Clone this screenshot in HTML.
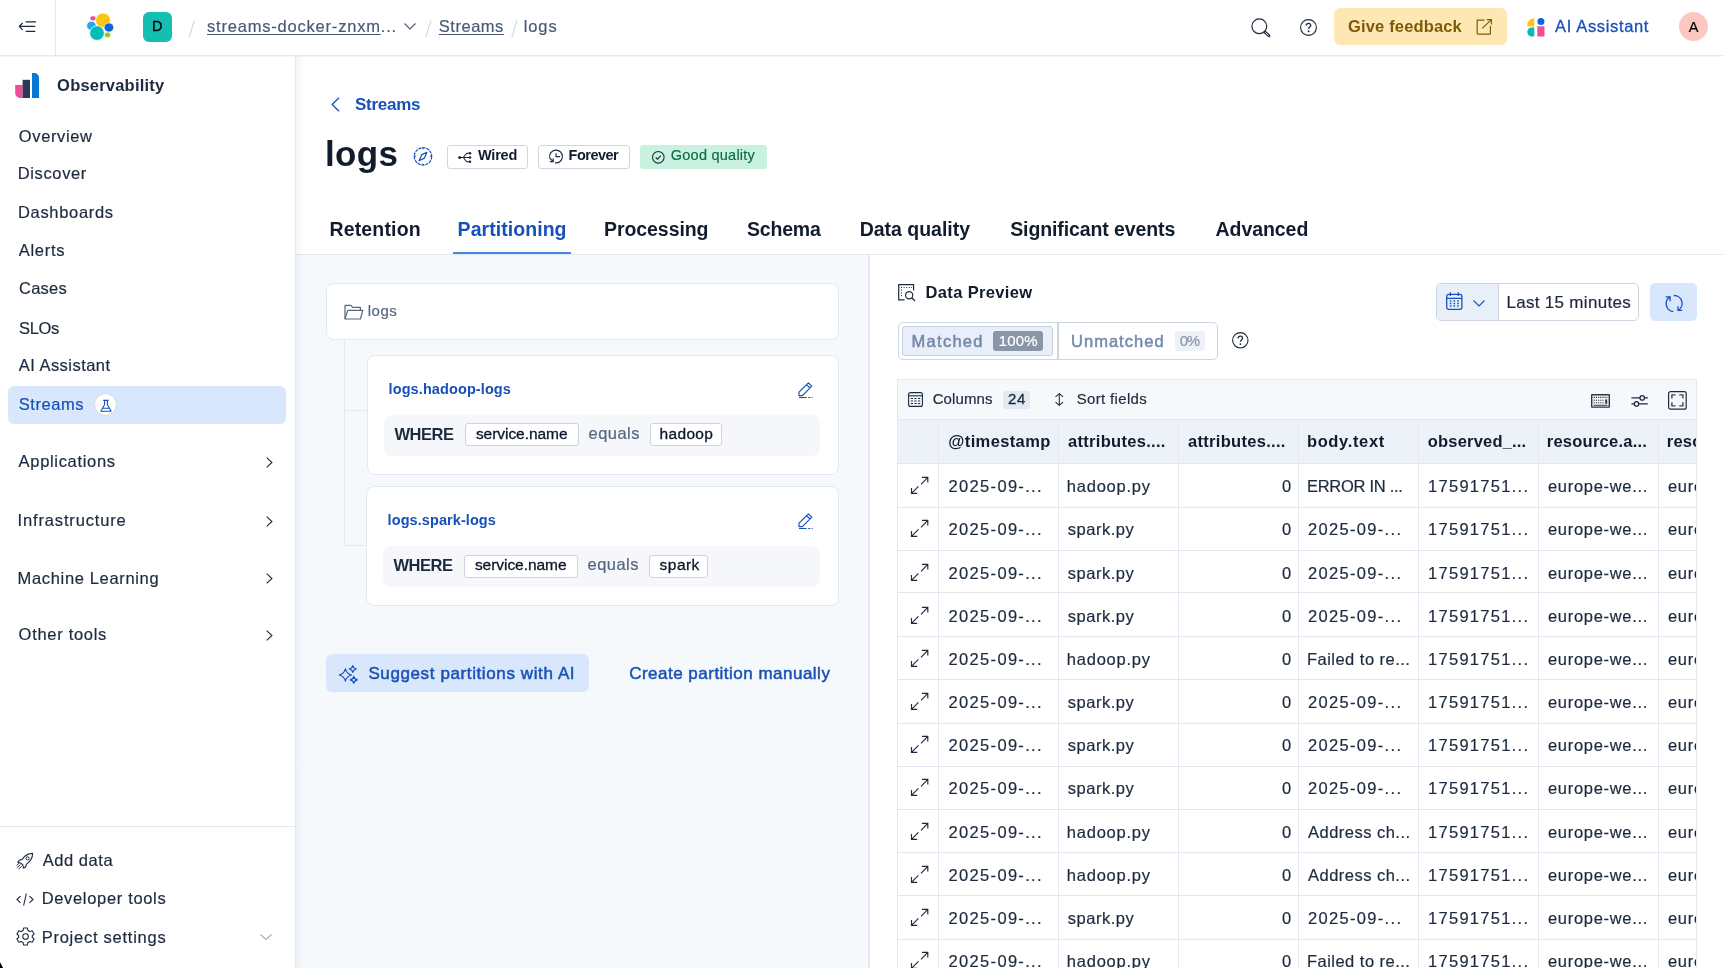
<!DOCTYPE html><html><head><meta charset="utf-8"><style>
*{box-sizing:border-box;margin:0;padding:0}
html,body{width:1723px;height:968px;overflow:hidden;background:#fff;font-family:"Liberation Sans",sans-serif;color:#1d2a3e}
.t{position:absolute;white-space:nowrap;line-height:1}
#w{position:absolute;left:0;top:0;width:1723px;height:968px;will-change:transform}
.a{position:absolute}
svg{position:absolute;overflow:visible}
</style></head><body><div id="w">
<div class="a" style="left:0;top:55px;width:1723px;height:1px;background:#e3e7ef"></div>
<div class="a" style="left:0;top:56px;width:1723px;height:1px;background:#f4f6f9"></div>
<div class="a" style="left:55px;top:0;width:1px;height:55px;background:#e3e7ef"></div>
<svg style="left:19px;top:21px" width="17" height="11" viewBox="0 0 17 11"><path d="M7.1 0.9H16.6M7.1 10.3H15.8M0.4 5.4H15.8M3.4 2.3Q1.2 4.3 0.4 5.4Q1.2 6.6 3.4 8.6" fill="none" stroke="#1d2a3e" stroke-width="1.15" stroke-linecap="round"/></svg>
<svg style="left:86px;top:13px" width="28" height="28" viewBox="0 0 28 28">
<g stroke="#fff" stroke-width="0.7">
<ellipse cx="7" cy="5.3" rx="3.1" ry="2.6" fill="#f04e98"/>
<ellipse cx="5.4" cy="12.8" rx="4.7" ry="4.5" fill="#1ba9f5"/>
<circle cx="17" cy="7.4" r="7.4" fill="#fec514"/>
<ellipse cx="22.9" cy="14.5" rx="4.8" ry="4.6" fill="#0b64dd"/>
<ellipse cx="21.5" cy="21.9" rx="3.1" ry="2.8" fill="#93c90e"/>
<circle cx="11" cy="20.1" r="7.3" fill="#02bcb7"/>
</g></svg>
<div class="a" style="left:143px;top:12.4px;width:29px;height:29.3px;border-radius:6px;background:#14bfb1"></div>
<div class="t" style="left:152.10px;top:19px;font-size:14.5px;font-weight:normal;color:#000;letter-spacing:0.000px;-webkit-text-stroke:0.35px #000">D</div>
<svg style="left:188px;top:19.5px" width="8" height="18"><path d="M6.3 0.5L1.2 17.3" stroke="#c9d0dc" stroke-width="1"/></svg>
<div class="t" style="left:207.00px;top:18px;font-size:16.5px;font-weight:normal;color:#4a5a78;letter-spacing:0.796px;-webkit-text-stroke:0.2px #4a5a78;"><span style="text-decoration:underline;text-decoration-thickness:1px;text-underline-offset:2px">streams-docker-znxm</span>...</div>
<svg style="left:404px;top:23px" width="12" height="7"><path d="M0.5 0.5L6 6L11.5 0.5" fill="none" stroke="#4a5a78" stroke-width="1.1"/></svg>
<svg style="left:425px;top:19.5px" width="8" height="18"><path d="M6 0.5L0.8 17.3" stroke="#c9d0dc" stroke-width="1"/></svg>
<div class="t" style="left:438.80px;top:18px;font-size:16.5px;font-weight:normal;color:#4a5a78;letter-spacing:0.520px;-webkit-text-stroke:0.2px #4a5a78;"><span style="text-decoration:underline;text-decoration-thickness:1px;text-underline-offset:2px">Streams</span></div>
<svg style="left:511px;top:19.5px" width="8" height="18"><path d="M6 0.5L0.8 17.3" stroke="#c9d0dc" stroke-width="1"/></svg>
<div class="t" style="left:523.80px;top:18px;font-size:16.5px;font-weight:normal;color:#4a5a78;letter-spacing:0.860px;-webkit-text-stroke:0.2px #4a5a78;">logs</div>
<svg style="left:1251px;top:18px" width="20" height="19" viewBox="0 0 20 19"><circle cx="8.3" cy="8.3" r="7.4" fill="none" stroke="#1d2a3e" stroke-width="1.2"/><path d="M13.9 14.1L17.9 17.7" stroke="#1d2a3e" stroke-width="2.9" stroke-linecap="round"/><path d="M14.4 14.6L17.5 17.3" stroke="#fff" stroke-width="0.9" stroke-linecap="round"/></svg>
<svg style="left:1300px;top:19px" width="17" height="17" viewBox="0 0 17 17"><circle cx="8.5" cy="8.5" r="7.9" fill="none" stroke="#1d2a3e" stroke-width="1.1"/><path d="M6.3 6.6C6.3 5.2 7.3 4.4 8.5 4.4C9.8 4.4 10.7 5.2 10.7 6.4C10.7 7.9 8.6 8 8.6 9.9" fill="none" stroke="#1d2a3e" stroke-width="1.3"/><circle cx="8.6" cy="12.3" r="0.95" fill="#1d2a3e"/></svg>
<div class="a" style="left:1334px;top:8.1px;width:173px;height:37.4px;border-radius:6px;background:#fde8b3"></div>
<div class="t" style="left:1348.00px;top:18px;font-size:16.5px;font-weight:bold;color:#7e5a08;letter-spacing:0.157px;">Give feedback</div>
<svg style="left:1476px;top:19px" width="17" height="16" viewBox="0 0 17 16"><path d="M8.5 1.1H1.2V14.6Q1.2 15.2 1.8 15.2H13.8Q14.4 15.2 14.4 14.6V7.1" fill="none" stroke="#7e5a08" stroke-width="1.2"/><path d="M6.2 9.4L15.4 0.6M10.8 0.6H15.4V5.4" fill="none" stroke="#7e5a08" stroke-width="1.2"/></svg>
<svg style="left:1527px;top:18px" width="18" height="19" viewBox="0 0 18 19">
<path d="M7.3 0.3V8.6H0.3V7.3A7 7 0 0 1 7.3 0.3Z" fill="#fec514"/>
<circle cx="13.9" cy="3.5" r="3.5" fill="#0b64dd"/>
<path d="M7.3 9.4V18.5H4.8A4.5 4.5 0 0 1 0.3 14V14A4.5 4.5 0 0 1 4.8 9.4Z" fill="#02bcb7"/>
<rect x="10.3" y="8.3" width="7.2" height="10.2" fill="#f04e98"/>
</svg>
<div class="t" style="left:1555.00px;top:18px;font-size:16.5px;font-weight:normal;color:#1750ba;letter-spacing:0.652px;-webkit-text-stroke:0.3px #1750ba">AI Assistant</div>
<div class="a" style="left:1679.2px;top:12.3px;width:29px;height:29px;border-radius:50%;background:#fbc8c1"></div>
<div class="t" style="left:1688.80px;top:20px;font-size:14.5px;font-weight:normal;color:#000;letter-spacing:0.000px;-webkit-text-stroke:0.2px #000">A</div>
<div class="a" style="left:295px;top:56px;width:1px;height:912px;background:#e3e7ef"></div>
<svg style="left:15px;top:73px" width="25" height="25" viewBox="0 0 25 25">
<path d="M0.2 11.9H7.6V25H5A4.8 4.8 0 0 1 0.2 20.2Z" fill="#f04e98"/>
<rect x="7.6" y="6.8" width="7.4" height="18.2" fill="#2a3a55"/>
<path d="M17 0H19.3A4.7 4.7 0 0 1 24 4.7V25H17Z" fill="#0877d2"/>
</svg>
<div class="t" style="left:57.10px;top:77px;font-size:16.5px;font-weight:bold;color:#1d2a3e;letter-spacing:0.211px;">Observability</div>
<div class="t" style="left:18.80px;top:128px;font-size:16.5px;font-weight:normal;color:#1d2a3e;letter-spacing:0.622px;-webkit-text-stroke:0.2px #1d2a3e;">Overview</div>
<div class="t" style="left:17.80px;top:165px;font-size:16.5px;font-weight:normal;color:#1d2a3e;letter-spacing:0.616px;-webkit-text-stroke:0.2px #1d2a3e;">Discover</div>
<div class="t" style="left:18.00px;top:204px;font-size:16.5px;font-weight:normal;color:#1d2a3e;letter-spacing:0.676px;-webkit-text-stroke:0.2px #1d2a3e;">Dashboards</div>
<div class="t" style="left:18.75px;top:242px;font-size:16.5px;font-weight:normal;color:#1d2a3e;letter-spacing:0.705px;-webkit-text-stroke:0.2px #1d2a3e;">Alerts</div>
<div class="t" style="left:19.00px;top:280px;font-size:16.5px;font-weight:normal;color:#1d2a3e;letter-spacing:0.245px;-webkit-text-stroke:0.2px #1d2a3e;">Cases</div>
<div class="t" style="left:19.00px;top:320px;font-size:16.5px;font-weight:normal;color:#1d2a3e;letter-spacing:-0.339px;-webkit-text-stroke:0.2px #1d2a3e;">SLOs</div>
<div class="t" style="left:18.80px;top:357px;font-size:16.5px;font-weight:normal;color:#1d2a3e;letter-spacing:0.461px;-webkit-text-stroke:0.2px #1d2a3e;">AI Assistant</div>
<div class="a" style="left:8.4px;top:385.6px;width:277.2px;height:38.3px;border-radius:6px;background:#d9e7fc"></div>
<div class="t" style="left:18.80px;top:396px;font-size:16.5px;font-weight:normal;color:#1750ba;letter-spacing:0.536px;-webkit-text-stroke:0.2px #1750ba;">Streams</div>
<div class="a" style="left:94px;top:392.8px;width:23px;height:23px;border-radius:50%;background:#fff;border:1px solid #cfd7e4"></div>
<svg style="left:99.5px;top:398.5px" width="12" height="13" viewBox="0 0 12 13"><path d="M3.2 1.4H8.6M4.6 1.4V5.6L0.9 12.2H11.1L7.4 5.6V1.4M2.7 9.2H9.3" fill="none" stroke="#1750ba" stroke-width="1.1" stroke-linejoin="round"/></svg>
<div class="t" style="left:18.60px;top:453px;font-size:16.5px;font-weight:normal;color:#1d2a3e;letter-spacing:0.680px;-webkit-text-stroke:0.2px #1d2a3e;">Applications</div>
<svg style="left:265.5px;top:457.0px" width="7" height="11" viewBox="0 0 7 11"><path d="M0.7 0.7L5.9 5.5L0.7 10.3" fill="none" stroke="#1d2a3e" stroke-width="1.1"/></svg>
<div class="t" style="left:17.60px;top:512px;font-size:16.5px;font-weight:normal;color:#1d2a3e;letter-spacing:0.836px;-webkit-text-stroke:0.2px #1d2a3e;">Infrastructure</div>
<svg style="left:265.5px;top:516.1px" width="7" height="11" viewBox="0 0 7 11"><path d="M0.7 0.7L5.9 5.5L0.7 10.3" fill="none" stroke="#1d2a3e" stroke-width="1.1"/></svg>
<div class="t" style="left:17.60px;top:570px;font-size:16.5px;font-weight:normal;color:#1d2a3e;letter-spacing:0.654px;-webkit-text-stroke:0.2px #1d2a3e;">Machine Learning</div>
<svg style="left:265.5px;top:573.3px" width="7" height="11" viewBox="0 0 7 11"><path d="M0.7 0.7L5.9 5.5L0.7 10.3" fill="none" stroke="#1d2a3e" stroke-width="1.1"/></svg>
<div class="t" style="left:18.60px;top:626px;font-size:16.5px;font-weight:normal;color:#1d2a3e;letter-spacing:0.705px;-webkit-text-stroke:0.2px #1d2a3e;">Other tools</div>
<svg style="left:265.5px;top:630.2px" width="7" height="11" viewBox="0 0 7 11"><path d="M0.7 0.7L5.9 5.5L0.7 10.3" fill="none" stroke="#1d2a3e" stroke-width="1.1"/></svg>
<div class="a" style="left:0;top:826px;width:295px;height:1px;background:#e3e7ef"></div>
<svg style="left:16px;top:852px" width="18" height="18" viewBox="0 0 18 18"><path d="M16.6 1.4C12.2 1.4 8.8 3.4 5.8 7.6L3.2 8.2L1.8 10.4L5 11.2L6.8 13L7.6 16.2L9.8 14.8L10.4 12.2C14.6 9.2 16.6 5.8 16.6 1.4Z" fill="none" stroke="#1d2a3e" stroke-width="1.1" stroke-linejoin="round"/><circle cx="11.6" cy="6.4" r="1.6" fill="none" stroke="#1d2a3e" stroke-width="1"/><path d="M4.2 12.6L1 15.8M5.6 14.2L2.6 17.2M3 11.2L0.6 13.6" stroke="#1d2a3e" stroke-width="1"/></svg>
<div class="t" style="left:42.70px;top:852px;font-size:16.5px;font-weight:normal;color:#1d2a3e;letter-spacing:0.560px;-webkit-text-stroke:0.2px #1d2a3e;">Add data</div>
<svg style="left:16px;top:893px" width="18" height="13" viewBox="0 0 18 13"><path d="M4.5 3.2L1 6.5L4.5 9.8M13.5 3.2L17 6.5L13.5 9.8M10.4 0.5L7.6 12.5" fill="none" stroke="#1d2a3e" stroke-width="1.1"/></svg>
<div class="t" style="left:41.70px;top:890px;font-size:16.5px;font-weight:normal;color:#1d2a3e;letter-spacing:0.665px;-webkit-text-stroke:0.2px #1d2a3e;">Developer tools</div>
<svg style="left:15.5px;top:927px" width="19" height="19" viewBox="0 0 19 19"><path d="M7.6 1H11.4L11.9 3.4L13.9 4.5L16.2 3.7L18.1 7L16.3 8.6V10.4L18.1 12L16.2 15.3L13.9 14.5L11.9 15.6L11.4 18H7.6L7.1 15.6L5.1 14.5L2.8 15.3L0.9 12L2.7 10.4V8.6L0.9 7L2.8 3.7L5.1 4.5L7.1 3.4Z" fill="none" stroke="#1d2a3e" stroke-width="1.1" stroke-linejoin="round"/><circle cx="9.5" cy="9.5" r="2.8" fill="none" stroke="#1d2a3e" stroke-width="1.1"/></svg>
<div class="t" style="left:41.70px;top:929px;font-size:16.5px;font-weight:normal;color:#1d2a3e;letter-spacing:0.743px;-webkit-text-stroke:0.2px #1d2a3e;">Project settings</div>
<svg style="left:260.3px;top:934px" width="12" height="6" viewBox="0 0 12 6"><path d="M0.5 0.5L6 5.5L11.5 0.5" fill="none" stroke="#a3aec2" stroke-width="1.1"/></svg>
<svg style="left:331px;top:97px" width="9" height="15" viewBox="0 0 9 15"><path d="M8 0.7L1.2 7.5L8 14.3" fill="none" stroke="#1750ba" stroke-width="1.25"/></svg>
<div class="t" style="left:355.00px;top:96px;font-size:17px;font-weight:bold;color:#1750ba;letter-spacing:-0.273px;">Streams</div>
<div class="t" style="left:325.00px;top:136px;font-size:35px;font-weight:bold;color:#111c2c;letter-spacing:0.372px;">logs</div>
<svg style="left:414px;top:147px" width="19" height="19" viewBox="0 0 19 19"><circle cx="9" cy="9.4" r="8.7" fill="none" stroke="#1750ba" stroke-width="1.2" stroke-dasharray="3.2 0.8"/><path d="M9 0.7V2.2M9 16.6V18.1M0.3 9.4H1.8M16.2 9.4H17.7" stroke="#1750ba" stroke-width="1.1"/><path d="M12.9 5.3L10.4 11.1L5.1 13.7L7.6 7.9Z" fill="none" stroke="#1750ba" stroke-width="1.2" stroke-linejoin="round"/></svg>
<div class="a" style="left:447.3px;top:144.5px;width:80.5px;height:24.5px;border:1px solid #cfd6e2;border-radius:3px;background:#fff"></div>
<svg style="left:458.3px;top:150.5px" width="14" height="13" viewBox="0 0 14 13"><path d="M1.5 6.5H5.3L8.6 2.2H12M5.3 6.5H12M5.3 6.5L8.6 10.8H12" fill="none" stroke="#1d2a3e" stroke-width="1.05"/><circle cx="1.7" cy="6.5" r="1.5" fill="#1d2a3e"/><circle cx="12" cy="2.2" r="1.3" fill="#1d2a3e"/><circle cx="12" cy="6.5" r="1.3" fill="#1d2a3e"/><circle cx="12" cy="10.8" r="1.3" fill="#1d2a3e"/></svg>
<div class="t" style="left:477.90px;top:148px;font-size:14.5px;font-weight:bold;color:#111c2c;letter-spacing:-0.173px;">Wired</div>
<div class="a" style="left:538px;top:144.5px;width:92.3px;height:24.5px;border:1px solid #cfd6e2;border-radius:3px;background:#fff"></div>
<svg style="left:548.5px;top:150px" width="14" height="14" viewBox="0 0 14 14"><path d="M4.2 11.6L0.82 8.16A6.4 6.4 0 1 1 5.89 12.8" fill="none" stroke="#1d2a3e" stroke-width="1.1"/><path d="M7 3.3V6.6H11.1" fill="none" stroke="#1d2a3e" stroke-width="1.1"/><path d="M0.9 11.6H4.2V8.6" fill="none" stroke="#1d2a3e" stroke-width="1.2"/></svg>
<div class="t" style="left:568.60px;top:148px;font-size:14.5px;font-weight:bold;color:#111c2c;letter-spacing:-0.525px;">Forever</div>
<div class="a" style="left:640.2px;top:144.5px;width:126.6px;height:24.5px;border-radius:3px;background:#c8f1e0"></div>
<svg style="left:651.7px;top:150.7px" width="13" height="13" viewBox="0 0 13 13"><circle cx="6.3" cy="6.3" r="5.8" fill="none" stroke="#1d2a3e" stroke-width="1.05"/><path d="M3.7 6.5L5.5 8.2L8.9 4.7" fill="none" stroke="#1d2a3e" stroke-width="1.05"/></svg>
<div class="t" style="left:670.80px;top:148px;font-size:14.5px;font-weight:normal;color:#0c6b3f;letter-spacing:0.240px;-webkit-text-stroke:0.15px #0c6b3f">Good quality</div>
<div class="t" style="left:329.40px;top:220px;font-size:19.5px;font-weight:bold;color:#111c2c;letter-spacing:0.175px;">Retention</div>
<div class="t" style="left:457.60px;top:220px;font-size:19.5px;font-weight:bold;color:#1750ba;letter-spacing:0.053px;">Partitioning</div>
<div class="t" style="left:604.00px;top:220px;font-size:19.5px;font-weight:bold;color:#111c2c;letter-spacing:-0.068px;">Processing</div>
<div class="t" style="left:747.00px;top:220px;font-size:19.5px;font-weight:bold;color:#111c2c;letter-spacing:-0.189px;">Schema</div>
<div class="t" style="left:859.70px;top:220px;font-size:19.5px;font-weight:bold;color:#111c2c;letter-spacing:-0.016px;">Data quality</div>
<div class="t" style="left:1010.20px;top:220px;font-size:19.5px;font-weight:bold;color:#111c2c;letter-spacing:-0.102px;">Significant events</div>
<div class="t" style="left:1215.50px;top:220px;font-size:19.5px;font-weight:bold;color:#111c2c;letter-spacing:-0.055px;">Advanced</div>
<div class="a" style="left:296px;top:254px;width:1427px;height:1px;background:#e3e7ef"></div>
<div class="a" style="left:453.4px;top:252px;width:117.3px;height:2px;background:#4a85e0"></div>
<div class="a" style="left:296px;top:255px;width:572.5px;height:713px;background:#f6f9fc"></div>
<div class="a" style="left:868.4px;top:255px;width:1.4px;height:713px;background:#e6e7f0"></div>
<div class="a" style="left:326.4px;top:283.4px;width:512.9px;height:57px;border:1px solid #e3e8f2;border-radius:8px;background:#fff"></div>
<svg style="left:344px;top:304px" width="20" height="16" viewBox="0 0 20 16"><path d="M1 15V1.4H6.8L8.8 3.4H16.4V6.4" fill="none" stroke="#56667f" stroke-width="1.2" stroke-linejoin="round"/><path d="M1 15L3.7 6.4H18.8L16.4 15Z" fill="none" stroke="#56667f" stroke-width="1.2" stroke-linejoin="round"/></svg>
<div class="t" style="left:367.70px;top:303px;font-size:15px;font-weight:normal;color:#56667f;letter-spacing:0.528px;-webkit-text-stroke:0.2px #56667f;">logs</div>
<div class="a" style="left:344px;top:340px;width:1.2px;height:205.5px;background:#e3e8f2"></div>
<div class="a" style="left:344px;top:409.8px;width:23px;height:1.2px;background:#e3e8f2"></div>
<div class="a" style="left:344px;top:544.5px;width:22px;height:1.2px;background:#e3e8f2"></div>
<div class="a" style="left:367px;top:355.2px;width:472.29999999999995px;height:120px;border:1px solid #e3e8f2;border-radius:8px;background:#fff"></div>
<div class="t" style="left:388.60px;top:382px;font-size:14.5px;font-weight:bold;color:#1750ba;letter-spacing:0.096px;">logs.hadoop-logs</div>
<svg style="left:798.4px;top:380.5px" width="16" height="18" viewBox="0 0 16 18"><path d="M1 14.6V11.2L10.4 1.8L13.8 5.2L4.4 14.6Z M8.6 3.6L12 7" fill="none" stroke="#1750ba" stroke-width="1.2" stroke-linejoin="round"/><path d="M1 16.5H8.7M10.2 16.5H12.3M13.6 16.5H14.6" stroke="#1750ba" stroke-width="1.2"/></svg>
<div class="a" style="left:384.3px;top:414.5px;width:435.7px;height:41.2px;border-radius:8px;background:#f5f7fb"></div>
<div class="t" style="left:394.40px;top:426px;font-size:16.5px;font-weight:bold;color:#1d2a3e;letter-spacing:-0.453px;">WHERE</div>
<div class="a" style="left:464.7px;top:423.4px;width:114px;height:23.1px;border:1px solid #cdd4e0;border-radius:3px;background:#fff"></div>
<div class="t" style="left:475.90px;top:426px;font-size:15.5px;font-weight:normal;color:#0b1628;letter-spacing:-0.041px;-webkit-text-stroke:0.3px #0b1628">service.name</div>
<div class="t" style="left:588.60px;top:425px;font-size:16.5px;font-weight:normal;color:#56667f;letter-spacing:0.446px;-webkit-text-stroke:0.2px #56667f;">equals</div>
<div class="a" style="left:650.0px;top:423.4px;width:72.3px;height:23.1px;border:1px solid #cdd4e0;border-radius:3px;background:#fff"></div>
<div class="t" style="left:659.60px;top:426px;font-size:15.5px;font-weight:normal;color:#0b1628;letter-spacing:0.320px;-webkit-text-stroke:0.3px #0b1628">hadoop</div>
<div class="a" style="left:366px;top:486.3px;width:473.29999999999995px;height:120px;border:1px solid #e3e8f2;border-radius:8px;background:#fff"></div>
<div class="t" style="left:387.60px;top:513px;font-size:14.5px;font-weight:bold;color:#1750ba;letter-spacing:0.079px;">logs.spark-logs</div>
<svg style="left:798.4px;top:511.6px" width="16" height="18" viewBox="0 0 16 18"><path d="M1 14.6V11.2L10.4 1.8L13.8 5.2L4.4 14.6Z M8.6 3.6L12 7" fill="none" stroke="#1750ba" stroke-width="1.2" stroke-linejoin="round"/><path d="M1 16.5H8.7M10.2 16.5H12.3M13.6 16.5H14.6" stroke="#1750ba" stroke-width="1.2"/></svg>
<div class="a" style="left:383.3px;top:545.6px;width:436.7px;height:41.2px;border-radius:8px;background:#f5f7fb"></div>
<div class="t" style="left:393.40px;top:557px;font-size:16.5px;font-weight:bold;color:#1d2a3e;letter-spacing:-0.453px;">WHERE</div>
<div class="a" style="left:463.7px;top:554.5px;width:114px;height:23.1px;border:1px solid #cdd4e0;border-radius:3px;background:#fff"></div>
<div class="t" style="left:474.90px;top:557px;font-size:15.5px;font-weight:normal;color:#0b1628;letter-spacing:-0.041px;-webkit-text-stroke:0.3px #0b1628">service.name</div>
<div class="t" style="left:587.60px;top:556px;font-size:16.5px;font-weight:normal;color:#56667f;letter-spacing:0.446px;-webkit-text-stroke:0.2px #56667f;">equals</div>
<div class="a" style="left:649.0px;top:554.5px;width:58.5px;height:23.1px;border:1px solid #cdd4e0;border-radius:3px;background:#fff"></div>
<div class="t" style="left:659.60px;top:557px;font-size:15.5px;font-weight:normal;color:#0b1628;letter-spacing:0.462px;-webkit-text-stroke:0.3px #0b1628">spark</div>
<div class="a" style="left:326.2px;top:653.8px;width:263.1px;height:38.2px;border-radius:6px;background:#d9e7fd"></div>
<svg style="left:339px;top:664.5px" width="20" height="20" viewBox="0 0 20 20"><g fill="none" stroke="#1750ba" stroke-width="1.2" stroke-linejoin="round"><path d="M6.4 3.9Q7.6 8.8 12.6 10Q7.6 11.2 6.4 16.1Q5.2 11.2 0.2 10Q5.2 8.8 6.4 3.9Z"/><path d="M13.8 0.6Q14.4 3.4 17.4 4Q14.4 4.6 13.8 7.4Q13.2 4.6 10.2 4Q13.2 3.4 13.8 0.6Z"/><path d="M14.8 11.3Q15.4 14.3 18.4 14.9Q15.4 15.5 14.8 18.3Q14.2 15.5 11.2 14.9Q14.2 14.3 14.8 11.3Z"/></g></svg>
<div class="t" style="left:368.40px;top:665px;font-size:17px;font-weight:normal;color:#1a52b3;letter-spacing:0.612px;-webkit-text-stroke:0.5px #1a52b3">Suggest partitions with AI</div>
<div class="t" style="left:629.20px;top:665px;font-size:17px;font-weight:normal;color:#1a52b3;letter-spacing:0.488px;-webkit-text-stroke:0.5px #1a52b3">Create partition manually</div>
<svg style="left:898px;top:284px" width="18" height="17" viewBox="0 0 18 17"><path d="M6.6 15.8H0.7V0.7H15.6V6.6" fill="none" stroke="#1d2a3e" stroke-width="1.2"/><path d="M3 3.5H4M5.6 3.5H6.6M8.2 3.5H9.2M10.8 3.5H11.8M13.2 3.5H14M3 6.2H4M3 8.9H4M3 11.6H4" stroke="#1d2a3e" stroke-width="1"/><circle cx="11.2" cy="11.2" r="3.6" fill="none" stroke="#1d2a3e" stroke-width="1.2"/><path d="M13.8 13.8L17 17" stroke="#1d2a3e" stroke-width="1.3"/></svg>
<div class="t" style="left:925.60px;top:284px;font-size:16.5px;font-weight:bold;color:#111c2c;letter-spacing:0.337px;">Data Preview</div>
<div class="a" style="left:897.9px;top:322.2px;width:320.3px;height:37.4px;border:1px solid #cdd5e1;border-radius:5px;background:#fff"></div>
<div class="a" style="left:901.6px;top:326.3px;width:151px;height:29.6px;border:1px solid #c6d0df;border-radius:3px;background:#e9eff8"></div>
<div class="a" style="left:1057.4px;top:322.2px;width:1.2px;height:37.4px;background:#cdd5e1"></div>
<div class="t" style="left:911.60px;top:333px;font-size:16.5px;font-weight:normal;color:#7489ab;letter-spacing:1.265px;-webkit-text-stroke:0.5px #7489ab">Matched</div>
<div class="a" style="left:993px;top:331.3px;width:49.6px;height:19.4px;border-radius:3px;background:#8a95a8"></div>
<div class="t" style="left:998.70px;top:333px;font-size:15px;font-weight:normal;color:#fff;letter-spacing:0.158px;-webkit-text-stroke:0.2px #fff">100%</div>
<div class="t" style="left:1071.00px;top:333px;font-size:16.5px;font-weight:normal;color:#7489ab;letter-spacing:1.025px;-webkit-text-stroke:0.5px #7489ab">Unmatched</div>
<div class="a" style="left:1175px;top:331px;width:29.8px;height:19.8px;border-radius:3px;background:#eef1f6"></div>
<div class="t" style="left:1179.80px;top:333px;font-size:15px;font-weight:normal;color:#8a95a8;letter-spacing:-1.442px;-webkit-text-stroke:0.2px #8a95a8;">0%</div>
<svg style="left:1232px;top:332px" width="17" height="17" viewBox="0 0 17 17"><circle cx="8.3" cy="8.3" r="7.7" fill="none" stroke="#1d2a3e" stroke-width="1.1"/><path d="M6.1 6.4C6.1 5 7.1 4.2 8.3 4.2C9.6 4.2 10.5 5 10.5 6.2C10.5 7.7 8.4 7.8 8.4 9.7" fill="none" stroke="#1d2a3e" stroke-width="1.3"/><circle cx="8.4" cy="12.1" r="0.95" fill="#1d2a3e"/></svg>
<div class="a" style="left:1436.2px;top:283.2px;width:203.3px;height:38.2px;border:1px solid #cdd5e1;border-radius:5px;background:#fff;overflow:hidden"><div style="position:absolute;left:0;top:0;width:61.6px;height:100%;background:#e9eff8;border-right:1px solid #cdd5e1"></div></div>
<svg style="left:1446.4px;top:292px" width="17" height="18" viewBox="0 0 17 18"><rect x="0.7" y="2.4" width="15.2" height="14.9" rx="2" fill="none" stroke="#1750ba" stroke-width="1.3"/><path d="M0.7 6.3H15.9M4.3 0.3V4M12.3 0.3V4" stroke="#1750ba" stroke-width="1.3"/><path d="M3.8 9H5.4M7.5 9H9.1M11.2 9H12.8M3.8 11.5H5.4M7.5 11.5H9.1M11.2 11.5H12.8M3.8 14H5.4M7.5 14H9.1M11.2 14H12.8" stroke="#1750ba" stroke-width="1.3"/></svg>
<svg style="left:1473px;top:299.5px" width="12" height="7" viewBox="0 0 12 7"><path d="M0.5 0.5L6 6L11.5 0.5" fill="none" stroke="#1750ba" stroke-width="1.1"/></svg>
<div class="t" style="left:1506.40px;top:294px;font-size:17px;font-weight:normal;color:#1d2a3e;letter-spacing:0.306px;-webkit-text-stroke:0.2px #1d2a3e;">Last 15 minutes</div>
<div class="a" style="left:1649.5px;top:283.2px;width:47.5px;height:38.2px;border-radius:5px;background:#d9e7fd"></div>
<svg style="left:1664.5px;top:294.5px" width="18" height="17" viewBox="0 0 18 17"><g fill="none" stroke="#1750ba" stroke-width="1.3"><path d="M5.1 1.9A8 8 0 0 0 8.3 16.7"/><path d="M8.8 0.5A8 8 0 0 1 13 15.5"/><path d="M0.7 1.9H5.1V6.2"/><path d="M13 11.3V15.4H17.2"/></g></svg>
<div class="a" style="left:897px;top:379px;width:800px;height:589px;border:1px solid #e3e8f2;border-bottom:none;background:#fff"></div>
<div class="a" style="left:898px;top:380px;width:798px;height:39px;background:#f6f9fc"></div>
<div class="a" style="left:897px;top:419px;width:800px;height:1px;background:#e3e8f2"></div>
<div class="a" style="left:898px;top:420px;width:798px;height:43px;background:#edf1f8"></div>
<div class="a" style="left:897px;top:463px;width:800px;height:1px;background:#e3e6ee"></div>
<svg style="left:908px;top:392.3px" width="15" height="15" viewBox="0 0 15 15"><rect x="0.6" y="0.6" width="13.8" height="13.8" rx="2" fill="none" stroke="#1d2a3e" stroke-width="1.1"/><path d="M0.6 3.8H14.4" stroke="#1d2a3e" stroke-width="1.1"/><path d="M2.8 6.5H5M6.4 6.5H8.6M10 6.5H12.2M2.8 9H5M6.4 9H8.6M10 9H12.2M2.8 11.5H5M6.4 11.5H8.6M10 11.5H12.2" stroke="#1d2a3e" stroke-width="1"/></svg>
<div class="t" style="left:932.70px;top:391px;font-size:15px;font-weight:normal;color:#1d2a3e;letter-spacing:0.085px;-webkit-text-stroke:0.2px #1d2a3e;">Columns</div>
<div class="a" style="left:1002.8px;top:390.9px;width:27.4px;height:17.8px;border-radius:3px;background:#e3e8f2"></div>
<div class="t" style="left:1008.00px;top:391px;font-size:15px;font-weight:normal;color:#1d2a3e;letter-spacing:0.658px;-webkit-text-stroke:0.3px #1d2a3e">24</div>
<svg style="left:1053.7px;top:393.3px" width="11" height="13" viewBox="0 0 11 13"><path d="M5.3 0.8V12.2M1.5 3.8L5.3 0.6L9.1 3.8M1.5 9.2L5.3 12.4L9.1 9.2" fill="none" stroke="#1d2a3e" stroke-width="1.05"/></svg>
<div class="t" style="left:1076.70px;top:391px;font-size:15px;font-weight:normal;color:#1d2a3e;letter-spacing:0.341px;-webkit-text-stroke:0.2px #1d2a3e;">Sort fields</div>
<svg style="left:1590.8px;top:394.3px" width="19" height="14" viewBox="0 0 19 14"><rect x="0.7" y="0.7" width="17.6" height="12.4" rx="0.4" fill="none" stroke="#2b3545" stroke-width="1.4"/><path d="M2.6 3.4H3.8M4.8 3.4H6M7 3.4H8.2M9.2 3.4H10.4M11.4 3.4H12.6M13.6 3.4H14.8M15.6 3.4H16.4M2.6 6.2H3.8M4.8 6.2H6M7 6.2H8.2M9.2 6.2H10.4M11.4 6.2H12.6M2.6 8.8H3.8M4.8 8.8H6M7 8.8H8.2M9.2 8.8H10.4M11.4 8.8H12.6M2.6 11.2H16.4" stroke="#2b3545" stroke-width="1.1"/><rect x="14.2" y="5.4" width="2" height="4.4" fill="#2b3545"/></svg>
<svg style="left:1630.5px;top:394.8px" width="17" height="12" viewBox="0 0 17 12"><path d="M0.4 2.9H9M13.4 2.9H16.8M0.4 8.9H3.4M7.6 8.9H16.8" stroke="#1d2a3e" stroke-width="1.1"/><circle cx="11.2" cy="2.9" r="2.2" fill="none" stroke="#1d2a3e" stroke-width="1.25"/><circle cx="5.5" cy="8.9" r="2.2" fill="none" stroke="#1d2a3e" stroke-width="1.25"/></svg>
<svg style="left:1668px;top:391.2px" width="19" height="19" viewBox="0 0 19 19"><rect x="0.6" y="0.6" width="17.6" height="17.6" rx="2" fill="none" stroke="#1d2a3e" stroke-width="1.2"/><path d="M3.9 7.6V3.9H7.6M11.2 3.9H14.9V7.6M14.9 11.2V14.9H11.2M7.6 14.9H3.9V11.2" fill="none" stroke="#3a4454" stroke-width="1.4"/></svg>
<div class="a" style="left:938px;top:419px;width:1px;height:549.0px;background:#e6e9f1"></div>
<div class="a" style="left:1058px;top:419px;width:1px;height:549.0px;background:#e6e9f1"></div>
<div class="a" style="left:1178px;top:419px;width:1px;height:549.0px;background:#e6e9f1"></div>
<div class="a" style="left:1298px;top:419px;width:1px;height:549.0px;background:#e6e9f1"></div>
<div class="a" style="left:1418px;top:419px;width:1px;height:549.0px;background:#e6e9f1"></div>
<div class="a" style="left:1538px;top:419px;width:1px;height:549.0px;background:#e6e9f1"></div>
<div class="a" style="left:1658px;top:419px;width:1px;height:549.0px;background:#e6e9f1"></div>
<div class="t" style="left:948.30px;top:433px;font-size:16.5px;font-weight:bold;color:#111c2c;letter-spacing:0.374px;">@timestamp</div>
<div class="t" style="left:1068.00px;top:433px;font-size:16.5px;font-weight:bold;color:#111c2c;letter-spacing:0.298px;">attributes....</div>
<div class="t" style="left:1188.00px;top:433px;font-size:16.5px;font-weight:bold;color:#111c2c;letter-spacing:0.298px;">attributes....</div>
<div class="t" style="left:1306.90px;top:433px;font-size:16.5px;font-weight:bold;color:#111c2c;letter-spacing:0.660px;">body.text</div>
<div class="t" style="left:1427.80px;top:433px;font-size:16.5px;font-weight:bold;color:#111c2c;letter-spacing:0.190px;">observed_...</div>
<div class="t" style="left:1546.80px;top:433px;font-size:16.5px;font-weight:bold;color:#111c2c;letter-spacing:0.239px;">resource.a...</div>
<div class="t" style="left:1666.80px;top:433px;font-size:16.5px;font-weight:bold;color:#111c2c;letter-spacing:0.239px;">resource.a...</div>
<div class="a" style="left:897px;top:507px;width:800.0px;height:1px;background:#e3e6ee"></div>
<svg style="left:911.2px;top:477.20px" width="18" height="17" viewBox="0 0 18 17"><path d="M10.9 0.4H16.8V5.6M16.8 0.4L10 7.3M0.5 10.9V16.3H6.2M0.5 16.3L7.4 9.4" fill="none" stroke="#1d2a3e" stroke-width="1.15"/></svg>
<div class="t" style="left:948.60px;top:478px;font-size:16.5px;font-weight:normal;color:#1d2a3e;letter-spacing:1.318px;-webkit-text-stroke:0.2px #1d2a3e;">2025-09-...</div>
<div class="t" style="left:1066.80px;top:478px;font-size:16.5px;font-weight:normal;color:#1d2a3e;letter-spacing:0.773px;-webkit-text-stroke:0.2px #1d2a3e;">hadoop.py</div>
<div class="t" style="left:1282.00px;top:478px;font-size:16.5px;font-weight:normal;color:#1d2a3e;letter-spacing:0.000px;-webkit-text-stroke:0.2px #1d2a3e;">0</div>
<div class="t" style="left:1307.00px;top:478px;font-size:16.5px;font-weight:normal;color:#1d2a3e;letter-spacing:-0.284px;-webkit-text-stroke:0.2px #1d2a3e;">ERROR IN ...</div>
<div class="t" style="left:1428.00px;top:478px;font-size:16.5px;font-weight:normal;color:#1d2a3e;letter-spacing:1.282px;-webkit-text-stroke:0.2px #1d2a3e;">17591751...</div>
<div class="t" style="left:1548.00px;top:478px;font-size:16.5px;font-weight:normal;color:#1d2a3e;letter-spacing:0.697px;-webkit-text-stroke:0.2px #1d2a3e;">europe-we...</div>
<div class="t" style="left:1668.00px;top:478px;font-size:16.5px;font-weight:normal;color:#1d2a3e;letter-spacing:0.697px;-webkit-text-stroke:0.2px #1d2a3e;">europe-we...</div>
<div class="a" style="left:897px;top:550px;width:800.0px;height:1px;background:#e3e6ee"></div>
<svg style="left:911.2px;top:520.38px" width="18" height="17" viewBox="0 0 18 17"><path d="M10.9 0.4H16.8V5.6M16.8 0.4L10 7.3M0.5 10.9V16.3H6.2M0.5 16.3L7.4 9.4" fill="none" stroke="#1d2a3e" stroke-width="1.15"/></svg>
<div class="t" style="left:948.60px;top:521px;font-size:16.5px;font-weight:normal;color:#1d2a3e;letter-spacing:1.318px;-webkit-text-stroke:0.2px #1d2a3e;">2025-09-...</div>
<div class="t" style="left:1067.80px;top:521px;font-size:16.5px;font-weight:normal;color:#1d2a3e;letter-spacing:0.499px;-webkit-text-stroke:0.2px #1d2a3e;">spark.py</div>
<div class="t" style="left:1282.00px;top:521px;font-size:16.5px;font-weight:normal;color:#1d2a3e;letter-spacing:0.000px;-webkit-text-stroke:0.2px #1d2a3e;">0</div>
<div class="t" style="left:1308.00px;top:521px;font-size:16.5px;font-weight:normal;color:#1d2a3e;letter-spacing:1.318px;-webkit-text-stroke:0.2px #1d2a3e;">2025-09-...</div>
<div class="t" style="left:1428.00px;top:521px;font-size:16.5px;font-weight:normal;color:#1d2a3e;letter-spacing:1.282px;-webkit-text-stroke:0.2px #1d2a3e;">17591751...</div>
<div class="t" style="left:1548.00px;top:521px;font-size:16.5px;font-weight:normal;color:#1d2a3e;letter-spacing:0.697px;-webkit-text-stroke:0.2px #1d2a3e;">europe-we...</div>
<div class="t" style="left:1668.00px;top:521px;font-size:16.5px;font-weight:normal;color:#1d2a3e;letter-spacing:0.697px;-webkit-text-stroke:0.2px #1d2a3e;">europe-we...</div>
<div class="a" style="left:897px;top:592px;width:800.0px;height:1px;background:#e3e6ee"></div>
<svg style="left:911.2px;top:563.56px" width="18" height="17" viewBox="0 0 18 17"><path d="M10.9 0.4H16.8V5.6M16.8 0.4L10 7.3M0.5 10.9V16.3H6.2M0.5 16.3L7.4 9.4" fill="none" stroke="#1d2a3e" stroke-width="1.15"/></svg>
<div class="t" style="left:948.60px;top:565px;font-size:16.5px;font-weight:normal;color:#1d2a3e;letter-spacing:1.318px;-webkit-text-stroke:0.2px #1d2a3e;">2025-09-...</div>
<div class="t" style="left:1067.80px;top:565px;font-size:16.5px;font-weight:normal;color:#1d2a3e;letter-spacing:0.499px;-webkit-text-stroke:0.2px #1d2a3e;">spark.py</div>
<div class="t" style="left:1282.00px;top:565px;font-size:16.5px;font-weight:normal;color:#1d2a3e;letter-spacing:0.000px;-webkit-text-stroke:0.2px #1d2a3e;">0</div>
<div class="t" style="left:1308.00px;top:565px;font-size:16.5px;font-weight:normal;color:#1d2a3e;letter-spacing:1.318px;-webkit-text-stroke:0.2px #1d2a3e;">2025-09-...</div>
<div class="t" style="left:1428.00px;top:565px;font-size:16.5px;font-weight:normal;color:#1d2a3e;letter-spacing:1.282px;-webkit-text-stroke:0.2px #1d2a3e;">17591751...</div>
<div class="t" style="left:1548.00px;top:565px;font-size:16.5px;font-weight:normal;color:#1d2a3e;letter-spacing:0.697px;-webkit-text-stroke:0.2px #1d2a3e;">europe-we...</div>
<div class="t" style="left:1668.00px;top:565px;font-size:16.5px;font-weight:normal;color:#1d2a3e;letter-spacing:0.697px;-webkit-text-stroke:0.2px #1d2a3e;">europe-we...</div>
<div class="a" style="left:897px;top:636px;width:800.0px;height:1px;background:#e3e6ee"></div>
<svg style="left:911.2px;top:606.74px" width="18" height="17" viewBox="0 0 18 17"><path d="M10.9 0.4H16.8V5.6M16.8 0.4L10 7.3M0.5 10.9V16.3H6.2M0.5 16.3L7.4 9.4" fill="none" stroke="#1d2a3e" stroke-width="1.15"/></svg>
<div class="t" style="left:948.60px;top:608px;font-size:16.5px;font-weight:normal;color:#1d2a3e;letter-spacing:1.318px;-webkit-text-stroke:0.2px #1d2a3e;">2025-09-...</div>
<div class="t" style="left:1067.80px;top:608px;font-size:16.5px;font-weight:normal;color:#1d2a3e;letter-spacing:0.499px;-webkit-text-stroke:0.2px #1d2a3e;">spark.py</div>
<div class="t" style="left:1282.00px;top:608px;font-size:16.5px;font-weight:normal;color:#1d2a3e;letter-spacing:0.000px;-webkit-text-stroke:0.2px #1d2a3e;">0</div>
<div class="t" style="left:1308.00px;top:608px;font-size:16.5px;font-weight:normal;color:#1d2a3e;letter-spacing:1.318px;-webkit-text-stroke:0.2px #1d2a3e;">2025-09-...</div>
<div class="t" style="left:1428.00px;top:608px;font-size:16.5px;font-weight:normal;color:#1d2a3e;letter-spacing:1.282px;-webkit-text-stroke:0.2px #1d2a3e;">17591751...</div>
<div class="t" style="left:1548.00px;top:608px;font-size:16.5px;font-weight:normal;color:#1d2a3e;letter-spacing:0.697px;-webkit-text-stroke:0.2px #1d2a3e;">europe-we...</div>
<div class="t" style="left:1668.00px;top:608px;font-size:16.5px;font-weight:normal;color:#1d2a3e;letter-spacing:0.697px;-webkit-text-stroke:0.2px #1d2a3e;">europe-we...</div>
<div class="a" style="left:897px;top:679px;width:800.0px;height:1px;background:#e3e6ee"></div>
<svg style="left:911.2px;top:649.92px" width="18" height="17" viewBox="0 0 18 17"><path d="M10.9 0.4H16.8V5.6M16.8 0.4L10 7.3M0.5 10.9V16.3H6.2M0.5 16.3L7.4 9.4" fill="none" stroke="#1d2a3e" stroke-width="1.15"/></svg>
<div class="t" style="left:948.60px;top:651px;font-size:16.5px;font-weight:normal;color:#1d2a3e;letter-spacing:1.318px;-webkit-text-stroke:0.2px #1d2a3e;">2025-09-...</div>
<div class="t" style="left:1066.80px;top:651px;font-size:16.5px;font-weight:normal;color:#1d2a3e;letter-spacing:0.773px;-webkit-text-stroke:0.2px #1d2a3e;">hadoop.py</div>
<div class="t" style="left:1282.00px;top:651px;font-size:16.5px;font-weight:normal;color:#1d2a3e;letter-spacing:0.000px;-webkit-text-stroke:0.2px #1d2a3e;">0</div>
<div class="t" style="left:1307.00px;top:651px;font-size:16.5px;font-weight:normal;color:#1d2a3e;letter-spacing:0.471px;-webkit-text-stroke:0.2px #1d2a3e;">Failed to re...</div>
<div class="t" style="left:1428.00px;top:651px;font-size:16.5px;font-weight:normal;color:#1d2a3e;letter-spacing:1.282px;-webkit-text-stroke:0.2px #1d2a3e;">17591751...</div>
<div class="t" style="left:1548.00px;top:651px;font-size:16.5px;font-weight:normal;color:#1d2a3e;letter-spacing:0.697px;-webkit-text-stroke:0.2px #1d2a3e;">europe-we...</div>
<div class="t" style="left:1668.00px;top:651px;font-size:16.5px;font-weight:normal;color:#1d2a3e;letter-spacing:0.697px;-webkit-text-stroke:0.2px #1d2a3e;">europe-we...</div>
<div class="a" style="left:897px;top:723px;width:800.0px;height:1px;background:#e3e6ee"></div>
<svg style="left:911.2px;top:693.10px" width="18" height="17" viewBox="0 0 18 17"><path d="M10.9 0.4H16.8V5.6M16.8 0.4L10 7.3M0.5 10.9V16.3H6.2M0.5 16.3L7.4 9.4" fill="none" stroke="#1d2a3e" stroke-width="1.15"/></svg>
<div class="t" style="left:948.60px;top:694px;font-size:16.5px;font-weight:normal;color:#1d2a3e;letter-spacing:1.318px;-webkit-text-stroke:0.2px #1d2a3e;">2025-09-...</div>
<div class="t" style="left:1067.80px;top:694px;font-size:16.5px;font-weight:normal;color:#1d2a3e;letter-spacing:0.499px;-webkit-text-stroke:0.2px #1d2a3e;">spark.py</div>
<div class="t" style="left:1282.00px;top:694px;font-size:16.5px;font-weight:normal;color:#1d2a3e;letter-spacing:0.000px;-webkit-text-stroke:0.2px #1d2a3e;">0</div>
<div class="t" style="left:1308.00px;top:694px;font-size:16.5px;font-weight:normal;color:#1d2a3e;letter-spacing:1.318px;-webkit-text-stroke:0.2px #1d2a3e;">2025-09-...</div>
<div class="t" style="left:1428.00px;top:694px;font-size:16.5px;font-weight:normal;color:#1d2a3e;letter-spacing:1.282px;-webkit-text-stroke:0.2px #1d2a3e;">17591751...</div>
<div class="t" style="left:1548.00px;top:694px;font-size:16.5px;font-weight:normal;color:#1d2a3e;letter-spacing:0.697px;-webkit-text-stroke:0.2px #1d2a3e;">europe-we...</div>
<div class="t" style="left:1668.00px;top:694px;font-size:16.5px;font-weight:normal;color:#1d2a3e;letter-spacing:0.697px;-webkit-text-stroke:0.2px #1d2a3e;">europe-we...</div>
<div class="a" style="left:897px;top:766px;width:800.0px;height:1px;background:#e3e6ee"></div>
<svg style="left:911.2px;top:736.28px" width="18" height="17" viewBox="0 0 18 17"><path d="M10.9 0.4H16.8V5.6M16.8 0.4L10 7.3M0.5 10.9V16.3H6.2M0.5 16.3L7.4 9.4" fill="none" stroke="#1d2a3e" stroke-width="1.15"/></svg>
<div class="t" style="left:948.60px;top:737px;font-size:16.5px;font-weight:normal;color:#1d2a3e;letter-spacing:1.318px;-webkit-text-stroke:0.2px #1d2a3e;">2025-09-...</div>
<div class="t" style="left:1067.80px;top:737px;font-size:16.5px;font-weight:normal;color:#1d2a3e;letter-spacing:0.499px;-webkit-text-stroke:0.2px #1d2a3e;">spark.py</div>
<div class="t" style="left:1282.00px;top:737px;font-size:16.5px;font-weight:normal;color:#1d2a3e;letter-spacing:0.000px;-webkit-text-stroke:0.2px #1d2a3e;">0</div>
<div class="t" style="left:1308.00px;top:737px;font-size:16.5px;font-weight:normal;color:#1d2a3e;letter-spacing:1.318px;-webkit-text-stroke:0.2px #1d2a3e;">2025-09-...</div>
<div class="t" style="left:1428.00px;top:737px;font-size:16.5px;font-weight:normal;color:#1d2a3e;letter-spacing:1.282px;-webkit-text-stroke:0.2px #1d2a3e;">17591751...</div>
<div class="t" style="left:1548.00px;top:737px;font-size:16.5px;font-weight:normal;color:#1d2a3e;letter-spacing:0.697px;-webkit-text-stroke:0.2px #1d2a3e;">europe-we...</div>
<div class="t" style="left:1668.00px;top:737px;font-size:16.5px;font-weight:normal;color:#1d2a3e;letter-spacing:0.697px;-webkit-text-stroke:0.2px #1d2a3e;">europe-we...</div>
<div class="a" style="left:897px;top:809px;width:800.0px;height:1px;background:#e3e6ee"></div>
<svg style="left:911.2px;top:779.46px" width="18" height="17" viewBox="0 0 18 17"><path d="M10.9 0.4H16.8V5.6M16.8 0.4L10 7.3M0.5 10.9V16.3H6.2M0.5 16.3L7.4 9.4" fill="none" stroke="#1d2a3e" stroke-width="1.15"/></svg>
<div class="t" style="left:948.60px;top:780px;font-size:16.5px;font-weight:normal;color:#1d2a3e;letter-spacing:1.318px;-webkit-text-stroke:0.2px #1d2a3e;">2025-09-...</div>
<div class="t" style="left:1067.80px;top:780px;font-size:16.5px;font-weight:normal;color:#1d2a3e;letter-spacing:0.499px;-webkit-text-stroke:0.2px #1d2a3e;">spark.py</div>
<div class="t" style="left:1282.00px;top:780px;font-size:16.5px;font-weight:normal;color:#1d2a3e;letter-spacing:0.000px;-webkit-text-stroke:0.2px #1d2a3e;">0</div>
<div class="t" style="left:1308.00px;top:780px;font-size:16.5px;font-weight:normal;color:#1d2a3e;letter-spacing:1.318px;-webkit-text-stroke:0.2px #1d2a3e;">2025-09-...</div>
<div class="t" style="left:1428.00px;top:780px;font-size:16.5px;font-weight:normal;color:#1d2a3e;letter-spacing:1.282px;-webkit-text-stroke:0.2px #1d2a3e;">17591751...</div>
<div class="t" style="left:1548.00px;top:780px;font-size:16.5px;font-weight:normal;color:#1d2a3e;letter-spacing:0.697px;-webkit-text-stroke:0.2px #1d2a3e;">europe-we...</div>
<div class="t" style="left:1668.00px;top:780px;font-size:16.5px;font-weight:normal;color:#1d2a3e;letter-spacing:0.697px;-webkit-text-stroke:0.2px #1d2a3e;">europe-we...</div>
<div class="a" style="left:897px;top:852px;width:800.0px;height:1px;background:#e3e6ee"></div>
<svg style="left:911.2px;top:822.64px" width="18" height="17" viewBox="0 0 18 17"><path d="M10.9 0.4H16.8V5.6M16.8 0.4L10 7.3M0.5 10.9V16.3H6.2M0.5 16.3L7.4 9.4" fill="none" stroke="#1d2a3e" stroke-width="1.15"/></svg>
<div class="t" style="left:948.60px;top:824px;font-size:16.5px;font-weight:normal;color:#1d2a3e;letter-spacing:1.318px;-webkit-text-stroke:0.2px #1d2a3e;">2025-09-...</div>
<div class="t" style="left:1066.80px;top:824px;font-size:16.5px;font-weight:normal;color:#1d2a3e;letter-spacing:0.773px;-webkit-text-stroke:0.2px #1d2a3e;">hadoop.py</div>
<div class="t" style="left:1282.00px;top:824px;font-size:16.5px;font-weight:normal;color:#1d2a3e;letter-spacing:0.000px;-webkit-text-stroke:0.2px #1d2a3e;">0</div>
<div class="t" style="left:1308.00px;top:824px;font-size:16.5px;font-weight:normal;color:#1d2a3e;letter-spacing:0.483px;-webkit-text-stroke:0.2px #1d2a3e;">Address ch...</div>
<div class="t" style="left:1428.00px;top:824px;font-size:16.5px;font-weight:normal;color:#1d2a3e;letter-spacing:1.282px;-webkit-text-stroke:0.2px #1d2a3e;">17591751...</div>
<div class="t" style="left:1548.00px;top:824px;font-size:16.5px;font-weight:normal;color:#1d2a3e;letter-spacing:0.697px;-webkit-text-stroke:0.2px #1d2a3e;">europe-we...</div>
<div class="t" style="left:1668.00px;top:824px;font-size:16.5px;font-weight:normal;color:#1d2a3e;letter-spacing:0.697px;-webkit-text-stroke:0.2px #1d2a3e;">europe-we...</div>
<div class="a" style="left:897px;top:895px;width:800.0px;height:1px;background:#e3e6ee"></div>
<svg style="left:911.2px;top:865.82px" width="18" height="17" viewBox="0 0 18 17"><path d="M10.9 0.4H16.8V5.6M16.8 0.4L10 7.3M0.5 10.9V16.3H6.2M0.5 16.3L7.4 9.4" fill="none" stroke="#1d2a3e" stroke-width="1.15"/></svg>
<div class="t" style="left:948.60px;top:867px;font-size:16.5px;font-weight:normal;color:#1d2a3e;letter-spacing:1.318px;-webkit-text-stroke:0.2px #1d2a3e;">2025-09-...</div>
<div class="t" style="left:1066.80px;top:867px;font-size:16.5px;font-weight:normal;color:#1d2a3e;letter-spacing:0.773px;-webkit-text-stroke:0.2px #1d2a3e;">hadoop.py</div>
<div class="t" style="left:1282.00px;top:867px;font-size:16.5px;font-weight:normal;color:#1d2a3e;letter-spacing:0.000px;-webkit-text-stroke:0.2px #1d2a3e;">0</div>
<div class="t" style="left:1308.00px;top:867px;font-size:16.5px;font-weight:normal;color:#1d2a3e;letter-spacing:0.483px;-webkit-text-stroke:0.2px #1d2a3e;">Address ch...</div>
<div class="t" style="left:1428.00px;top:867px;font-size:16.5px;font-weight:normal;color:#1d2a3e;letter-spacing:1.282px;-webkit-text-stroke:0.2px #1d2a3e;">17591751...</div>
<div class="t" style="left:1548.00px;top:867px;font-size:16.5px;font-weight:normal;color:#1d2a3e;letter-spacing:0.697px;-webkit-text-stroke:0.2px #1d2a3e;">europe-we...</div>
<div class="t" style="left:1668.00px;top:867px;font-size:16.5px;font-weight:normal;color:#1d2a3e;letter-spacing:0.697px;-webkit-text-stroke:0.2px #1d2a3e;">europe-we...</div>
<div class="a" style="left:897px;top:939px;width:800.0px;height:1px;background:#e3e6ee"></div>
<svg style="left:911.2px;top:909.00px" width="18" height="17" viewBox="0 0 18 17"><path d="M10.9 0.4H16.8V5.6M16.8 0.4L10 7.3M0.5 10.9V16.3H6.2M0.5 16.3L7.4 9.4" fill="none" stroke="#1d2a3e" stroke-width="1.15"/></svg>
<div class="t" style="left:948.60px;top:910px;font-size:16.5px;font-weight:normal;color:#1d2a3e;letter-spacing:1.318px;-webkit-text-stroke:0.2px #1d2a3e;">2025-09-...</div>
<div class="t" style="left:1067.80px;top:910px;font-size:16.5px;font-weight:normal;color:#1d2a3e;letter-spacing:0.499px;-webkit-text-stroke:0.2px #1d2a3e;">spark.py</div>
<div class="t" style="left:1282.00px;top:910px;font-size:16.5px;font-weight:normal;color:#1d2a3e;letter-spacing:0.000px;-webkit-text-stroke:0.2px #1d2a3e;">0</div>
<div class="t" style="left:1308.00px;top:910px;font-size:16.5px;font-weight:normal;color:#1d2a3e;letter-spacing:1.318px;-webkit-text-stroke:0.2px #1d2a3e;">2025-09-...</div>
<div class="t" style="left:1428.00px;top:910px;font-size:16.5px;font-weight:normal;color:#1d2a3e;letter-spacing:1.282px;-webkit-text-stroke:0.2px #1d2a3e;">17591751...</div>
<div class="t" style="left:1548.00px;top:910px;font-size:16.5px;font-weight:normal;color:#1d2a3e;letter-spacing:0.697px;-webkit-text-stroke:0.2px #1d2a3e;">europe-we...</div>
<div class="t" style="left:1668.00px;top:910px;font-size:16.5px;font-weight:normal;color:#1d2a3e;letter-spacing:0.697px;-webkit-text-stroke:0.2px #1d2a3e;">europe-we...</div>
<div class="a" style="left:897px;top:982px;width:800.0px;height:1px;background:#e3e6ee"></div>
<svg style="left:911.2px;top:952.18px" width="18" height="17" viewBox="0 0 18 17"><path d="M10.9 0.4H16.8V5.6M16.8 0.4L10 7.3M0.5 10.9V16.3H6.2M0.5 16.3L7.4 9.4" fill="none" stroke="#1d2a3e" stroke-width="1.15"/></svg>
<div class="t" style="left:948.60px;top:953px;font-size:16.5px;font-weight:normal;color:#1d2a3e;letter-spacing:1.318px;-webkit-text-stroke:0.2px #1d2a3e;">2025-09-...</div>
<div class="t" style="left:1066.80px;top:953px;font-size:16.5px;font-weight:normal;color:#1d2a3e;letter-spacing:0.773px;-webkit-text-stroke:0.2px #1d2a3e;">hadoop.py</div>
<div class="t" style="left:1282.00px;top:953px;font-size:16.5px;font-weight:normal;color:#1d2a3e;letter-spacing:0.000px;-webkit-text-stroke:0.2px #1d2a3e;">0</div>
<div class="t" style="left:1307.00px;top:953px;font-size:16.5px;font-weight:normal;color:#1d2a3e;letter-spacing:0.471px;-webkit-text-stroke:0.2px #1d2a3e;">Failed to re...</div>
<div class="t" style="left:1428.00px;top:953px;font-size:16.5px;font-weight:normal;color:#1d2a3e;letter-spacing:1.282px;-webkit-text-stroke:0.2px #1d2a3e;">17591751...</div>
<div class="t" style="left:1548.00px;top:953px;font-size:16.5px;font-weight:normal;color:#1d2a3e;letter-spacing:0.697px;-webkit-text-stroke:0.2px #1d2a3e;">europe-we...</div>
<div class="t" style="left:1668.00px;top:953px;font-size:16.5px;font-weight:normal;color:#1d2a3e;letter-spacing:0.697px;-webkit-text-stroke:0.2px #1d2a3e;">europe-we...</div>
<div class="a" style="left:1697px;top:379px;width:26px;height:589px;background:#fff"></div>
<div class="a" style="left:1696px;top:379px;width:1px;height:589px;background:#e3e8f2"></div>
<svg style="left:0;top:962px" width="4" height="6"><path d="M0 0L3 6H0Z" fill="#000"/></svg>
<div class="a" style="left:296px;top:56px;width:9px;height:912px;background:linear-gradient(90deg,rgba(30,40,70,0.045),rgba(30,40,70,0))"></div>
</div></body></html>
